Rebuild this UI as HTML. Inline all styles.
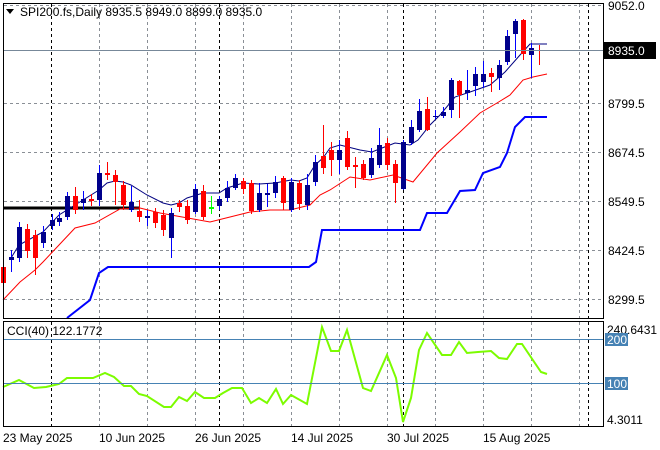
<!DOCTYPE html><html><head><style>
body{margin:0;background:#fff;width:660px;height:450px;overflow:hidden}
svg{display:block;font-family:"Liberation Sans",sans-serif;font-size:12px}
</style></head><body>
<svg id="s" width="660" height="450" xmlns="http://www.w3.org/2000/svg">
<rect width="660" height="450" fill="#fff"/>
<g id="grid" stroke="#8a8f96" stroke-dasharray="3,3" stroke-width="1"></g>
<g id="c"></g>
<rect x="3.5" y="3.5" width="600" height="315" fill="none" stroke="#000"/>
<rect x="3.5" y="321.5" width="600" height="105" fill="none" stroke="#000"/>
<line x1="4" y1="50.5" x2="603" y2="50.5" stroke="#778899"/>
<line x1="4" y1="339.5" x2="603" y2="339.5" stroke="#4682b4"/>
<line x1="4" y1="383.5" x2="603" y2="383.5" stroke="#4682b4"/>
<polygon points="6,9 14,9 10,14" fill="#000"/>
<text x="20" y="16">SPI200.fs,Daily  8935.5 8949.0 8899.0 8935.0</text>
<text x="7" y="335">CCI(40) 122.1772</text>
<g fill="#000">
<text x="608" y="10">9052.0</text>
<text x="608" y="108">8799.5</text>
<text x="608" y="157">8674.5</text>
<text x="608" y="206">8549.5</text>
<text x="608" y="255">8424.5</text>
<text x="608" y="304">8299.5</text>
<text x="607" y="334">240.6431</text>
<text x="607" y="424">4.3011</text>
</g>
<rect x="604" y="42" width="52" height="17" fill="#000"/>
<text x="608" y="55" fill="#fff">8935.0</text>
<rect x="605" y="333" width="23" height="13" fill="#4682b4"/>
<text x="607" y="344" fill="#fff">200</text>
<rect x="605" y="377" width="23" height="13" fill="#4682b4"/>
<text x="607" y="388" fill="#fff">100</text>
<g fill="#000">
<text x="3" y="442">23 May 2025</text>
<text x="99" y="442">10 Jun 2025</text>
<text x="195" y="442">26 Jun 2025</text>
<text x="291" y="442">14 Jul 2025</text>
<text x="387" y="442">30 Jul 2025</text>
<text x="483" y="442">15 Aug 2025</text>
</g>
</svg>
<script>
var NS="http://www.w3.org/2000/svg",g=document.getElementById('grid'),c=document.getElementById('c');
function el(p,t,a){var e=document.createElementNS(NS,t);for(var k in a)e.setAttribute(k,a[k]);p.appendChild(e);return e;}
[5,103,152,201,250,299].forEach(function(y){el(g,'line',{x1:4,x2:603,y1:y+.5,y2:y+.5});});
[99,147,195,243,291,339,387,435,483,531,579].forEach(function(x){el(g,'line',{x1:x+.5,x2:x+.5,y1:4,y2:318});el(g,'line',{x1:x+.5,x2:x+.5,y1:322,y2:426});});
[51,219,403,588].forEach(function(x){el(g,'line',{x1:x+.5,x2:x+.5,y1:4,y2:318,stroke:'#000'});el(g,'line',{x1:x+.5,x2:x+.5,y1:322,y2:426,stroke:'#000'});});
el(c,'line',{x1:3,x2:139,y1:208,y2:208,stroke:'#000','stroke-width':3});
function pl(pts,col,w){el(c,'polyline',{points:pts,fill:'none',stroke:col,'stroke-width':w});}
pl("67,318 90,300 99,273 108,267 309,267 316,262 322,230 420,230 427,213 447,213 460,191 475,190 483,173 500,167 507,153 515,127 525,117 547,117","#0000ff",2);
pl("3,300 20,282 35,270 43,262 59,245 75,228 95,223 120,209 140,208 160,213 210,222 230,217 250,212 270,210 290,210 310,205 320,195 330,190 350,177 370,180 393,175 413,182 437,153 460,132 480,113 497,103 510,95 523,80 533,77 547,74","#ff0000",1);
pl("11,258 19,245 43,232 59,215 75,205 99,190 107,183 115,181 123,182 131,185 147,195 163,203 171,205 179,203 187,198 203,193 219,193 227,188 243,183 259,184 275,183 291,180 299,181 307,178 315,165 323,158 330,148 340,145 360,150 372,152 382,148 395,143 410,145 418,140 430,125 440,115 455,97 470,92 490,85 505,72 520,55 530,44 547,44","#000080",1);
// candles: x, top, bottom, wickTop, wickBottom, color(b/r/g)
var C=[[3,267,283,258,290,'r'],[11,257,260,250,272,'b'],[19,227,258,222,262,'b'],[27,229,251,224,258,'r'],[35,235,258,230,275,'r'],[43,232,243,226,248,'b'],[52,220,226,214,230,'b'],[59,218,222,212,226,'b'],[67,196,217,192,220,'b'],[75,196,210,187,214,'r'],[83,199,203,191,210,'b'],[91,199,201,194,206,'r'],[99,173,200,165,206,'b'],[107,173,175,162,180,'r'],[115,175,182,170,205,'r'],[123,185,205,181,210,'r'],[131,202,210,186,212,'b'],[139,211,217,200,222,'r'],[147,216,218,210,226,'b'],[155,212,223,208,228,'r'],[163,215,230,210,236,'r'],[171,213,238,208,258,'b'],[179,203,207,200,212,'r'],[187,206,220,200,224,'r'],[195,189,212,184,214,'b'],[203,191,217,185,220,'r'],[211,207,209,196,214,'g'],[219,199,206,196,210,'b'],[227,188,198,181,202,'b'],[235,178,188,174,190,'b'],[243,181,189,178,194,'r'],[251,183,211,180,214,'r'],[259,193,210,183,212,'b'],[267,193,195,184,207,'b'],[275,182,193,176,198,'b'],[283,178,203,176,210,'r'],[291,182,210,178,212,'b'],[299,183,204,180,210,'r'],[307,185,205,174,210,'b'],[315,162,182,155,186,'b'],[323,156,168,125,174,'r'],[331,150,160,142,176,'r'],[339,150,160,140,174,'b'],[347,138,167,131,170,'r'],[355,165,167,157,188,'r'],[363,164,178,160,180,'r'],[371,158,175,148,178,'b'],[379,145,165,128,168,'b'],[387,143,165,138,170,'r'],[395,164,183,160,203,'r'],[403,142,189,140,190,'b'],[411,127,143,120,145,'b'],[419,111,130,99,132,'b'],[427,109,130,97,131,'r'],[435,116,117,110,119,'b'],[443,112,116,107,118,'b'],[451,80,110,78,118,'b'],[459,81,95,80,118,'r'],[467,90,93,70,100,'b'],[475,74,86,67,96,'b'],[483,74,82,61,88,'b'],[491,73,77,68,92,'r'],[499,65,78,60,90,'b'],[507,36,62,30,65,'b'],[515,21,34,19,58,'b'],[523,20,54,19,60,'r'],[531,48,55,43,78,'b'],[539,50,51,45,65,'r']];
var col={b:'#00008b',r:'#ff0000',g:'#00ff00'},wc={b:'#0000ff',r:'#ff0000',g:'#00ff00'};
C.forEach(function(d){var x=d[0];el(c,'line',{x1:x+.5,x2:x+.5,y1:d[3],y2:d[4],stroke:wc[d[5]]});
el(c,'rect',{x:x-2,y:d[1],width:5,height:Math.max(1,d[2]-d[1]),fill:col[d[5]]});});
pl("3,387 19,380 34,388 46,387 59,384 67,378 76,378 93,378 105,373 114,377 124,386 131,386 139,394 147,396 164,407 171,407 179,397 187,401 195,392 204,398 215,398 223,393 232,388 242,388 251,403 259,398 267,403 276,389 283,404 291,395 307,404 322,327 331,351 339,351 347,330 363,388 371,391 387,355 396,378 403,422 411,398 419,350 427,333 442,355 451,355 459,342 467,353 478,352 491,351 499,358 507,359 517,344 522,344 541,372 547,374","#7cfc00",2);
</script>
</body></html>
